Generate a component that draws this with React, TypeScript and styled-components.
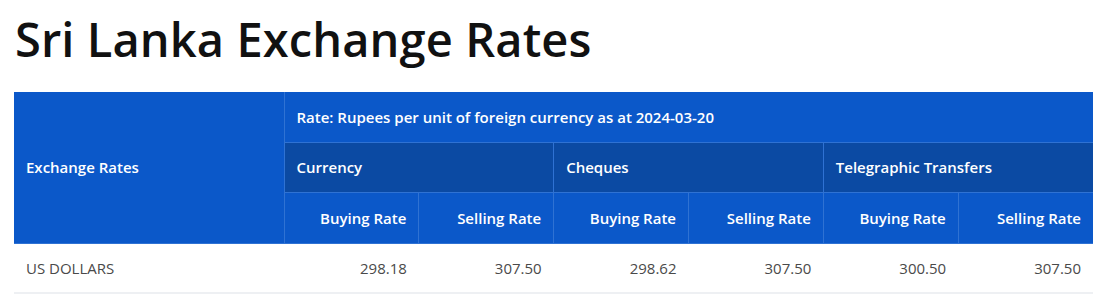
import React from 'react';
import styled, { createGlobalStyle } from 'styled-components';

const GlobalStyle = createGlobalStyle`
  html, body {
    margin: 0;
    padding: 0;
    background: #fff;
  }
  body {
    font-family: "Open Sans", "Noto Sans", sans-serif;
  }
`;

interface Rate {
  name: string;
  currency: [string, string];
  cheques: [string, string];
  transfers: [string, string];
}

const rates: Rate[] = [
  {
    name: 'US DOLLARS',
    currency: ['298.18', '307.50'],
    cheques: ['298.62', '307.50'],
    transfers: ['300.50', '307.50'],
  },
];

const Page = styled.div`
  padding: 0 7px 0 14px;
`;

const Title = styled.h1`
  margin: 0;
  padding: 10px 0 24px 1px;
  font-size: 47px;
  line-height: 58px;
  font-weight: 600;
  color: #111;
  letter-spacing: 0.1px;
`;

const Table = styled.table`
  width: 1079px;
  border-collapse: collapse;
  table-layout: fixed;
  font-size: 15px;
`;

const HeadRow = styled.tr<{ $h: number }>`
  height: ${(p) => p.$h}px;
`;

const HeadCell = styled.th<{ $dark?: boolean; $right?: boolean }>`
  background: ${(p) => (p.$dark ? '#0b4aa3' : '#0b58c9')};
  color: #fff;
  font-weight: 600;
  text-align: ${(p) => (p.$right ? 'right' : 'left')};
  padding: 0 12px;
  border: 1px solid #2f72d3;
  border-top: none;
  &:first-child {
    border-left: none;
  }
  &:last-child {
    border-right: none;
  }
`;

const Cell = styled.td<{ $right?: boolean }>`
  color: #4a4a4a;
  text-align: ${(p) => (p.$right ? 'right' : 'left')};
  padding: 0 12px;
  height: 48px;
  border-bottom: 2px solid #eef0f3;
`;

const App: React.FC = () => {
  return (
    <Page>
      <GlobalStyle />
      <Title>Sri Lanka Exchange Rates</Title>
      <Table>
        <colgroup>
          <col style={{ width: 270 }} />
          <col />
          <col />
          <col />
          <col />
          <col />
          <col />
        </colgroup>
        <thead>
          <HeadRow $h={50}>
            <HeadCell rowSpan={3}>Exchange Rates</HeadCell>
            <HeadCell colSpan={6}>
              Rate: Rupees per unit of foreign currency as at 2024-03-20
            </HeadCell>
          </HeadRow>
          <HeadRow $h={50}>
            <HeadCell $dark colSpan={2}>Currency</HeadCell>
            <HeadCell $dark colSpan={2}>Cheques</HeadCell>
            <HeadCell $dark colSpan={2}>Telegraphic Transfers</HeadCell>
          </HeadRow>
          <HeadRow $h={51}>
            {['Buying Rate', 'Selling Rate', 'Buying Rate', 'Selling Rate', 'Buying Rate', 'Selling Rate'].map(
              (label, i) => (
                <HeadCell key={i} $right>
                  {label}
                </HeadCell>
              )
            )}
          </HeadRow>
        </thead>
        <tbody>
          {rates.map((r) => (
            <tr key={r.name}>
              <Cell>{r.name}</Cell>
              {[...r.currency, ...r.cheques, ...r.transfers].map((v, i) => (
                <Cell key={i} $right>
                  {v}
                </Cell>
              ))}
            </tr>
          ))}
        </tbody>
      </Table>
    </Page>
  );
};

export default App;
